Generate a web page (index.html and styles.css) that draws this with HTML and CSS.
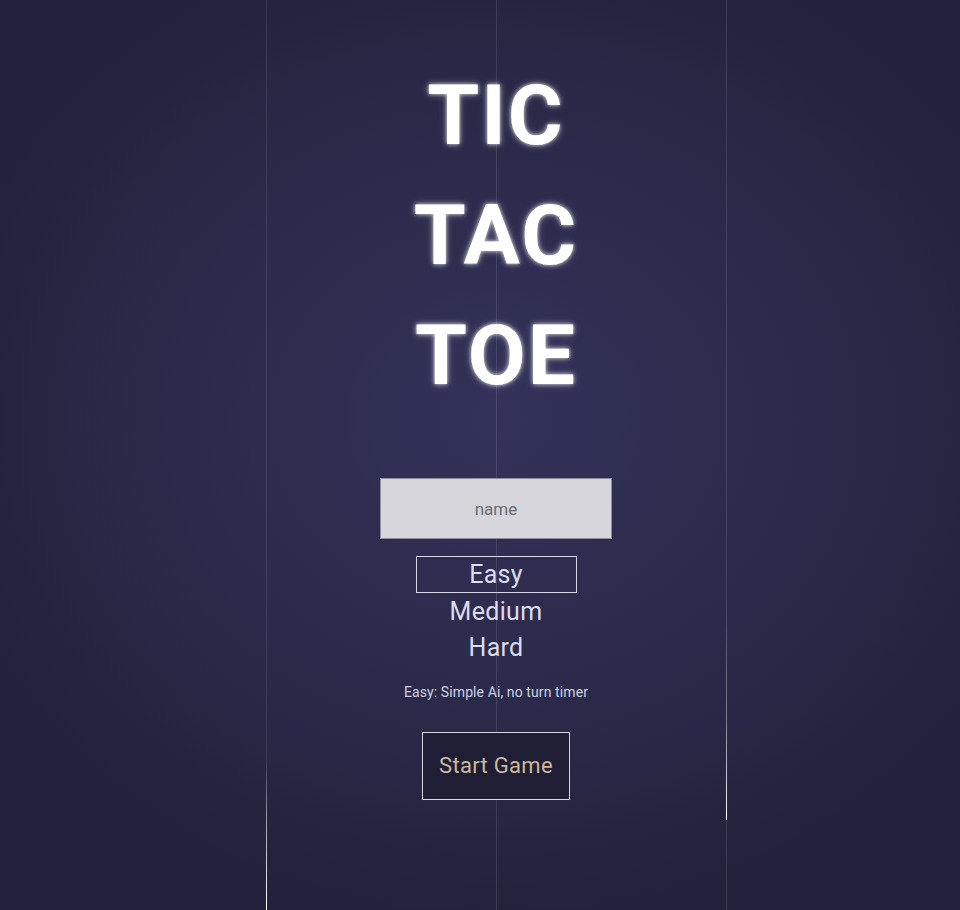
FILE: index.html
```html
<!DOCTYPE html>
<html lang="en">
<head>
<meta charset="utf-8">
<title>Tic Tac Toe</title>
<link rel="stylesheet" href="styles.css">
</head>
<body>
<div class="page">
  <div class="lines" aria-hidden="true">
    <div class="line line-left"><span class="drop drop-left"></span></div>
    <div class="line"></div>
    <div class="line line-right"><span class="drop drop-right"></span></div>
  </div>
  <main class="menu">
    <h1 class="title"><span>TIC</span><span>TAC</span><span>TOE</span></h1>
    <input class="name-input" type="text" placeholder="name">
    <ul class="levels">
      <li class="level selected">Easy</li>
      <li class="level">Medium</li>
      <li class="level">Hard</li>
    </ul>
    <p class="level-info">Easy: Simple Ai, no turn timer</p>
    <button class="start" type="button">Start Game</button>
  </main>
</div>
</body>
</html>
```

FILE: styles.css
```css
html, body {
  margin: 0;
  padding: 0;
  height: 100%;
}
body {
  background: radial-gradient(ellipse 60% 55% at 496px 420px, #33325a 0%, #2b2a4a 55%, #23223c 100%);
  background-color: #252440;
  font-family: Roboto, "Noto Sans", sans-serif;
  overflow: hidden;
}
.page {
  position: relative;
  width: 928px;
  height: 910px;
  margin-left: 32px;
}
.lines {
  position: absolute;
  top: 0;
  left: 234px;
  width: 461px;
  height: 910px;
  display: flex;
  justify-content: space-between;
  pointer-events: none;
}
.line {
  position: relative;
  width: 1px;
  height: 100%;
  background: rgba(255, 255, 255, 0.11);
}
.drop {
  position: absolute;
  left: 0;
  width: 1px;
}
.drop-left {
  top: 760px;
  height: 150px;
  background: linear-gradient(to bottom, rgba(255,255,255,0) 0%, rgba(255,255,255,0.5) 40%, #ffffff 100%);
}
.drop-right {
  top: 600px;
  height: 220px;
  background: linear-gradient(to bottom, rgba(255,255,255,0) 0%, rgba(255,255,255,0.35) 55%, #ffffff 100%);
}
.menu {
  position: relative;
  display: flex;
  flex-direction: column;
  align-items: center;
  padding-top: 56px;
}
.title {
  margin: 0;
  display: flex;
  flex-direction: column;
  align-items: center;
  font-size: 84px;
  line-height: 120px;
  font-weight: 700;
  letter-spacing: 2px;
  color: #ffffff;
  text-shadow: 0 0 4px rgba(255, 255, 255, 0.8), 0 0 9px rgba(255, 255, 255, 0.3);
}
.name-input {
  margin-top: 62px;
  width: 232px;
  height: 61px;
  box-sizing: border-box;
  border: 1px solid #8e8e98;
  background: #d6d6dc;
  font-family: inherit;
  font-size: 17px;
  text-align: center;
  color: #333;
}
.name-input::placeholder {
  color: #6b6b73;
}
.levels {
  list-style: none;
  margin: 17px 0 0;
  padding: 0;
  display: flex;
  flex-direction: column;
  align-items: center;
}
.level {
  width: 161px;
  height: 37px;
  box-sizing: border-box;
  display: flex;
  align-items: center;
  justify-content: center;
  font-size: 25px;
  letter-spacing: 0.3px;
  color: #dcdcf0;
  border: 1px solid transparent;
  margin-bottom: -0.5px;
}
.level.selected {
  border-color: #d8d8ea;
}
.level-info {
  margin: 18px 0 0;
  font-size: 14px;
  letter-spacing: 0.1px;
  color: #cfd0e6;
}
.start {
  margin-top: 32px;
  width: 148px;
  height: 68px;
  box-sizing: border-box;
  background: #1f1e35;
  border: 1px solid #d6d6e2;
  color: #cdb99a;
  font-family: inherit;
  font-size: 22px;
  letter-spacing: 0.3px;
  padding: 0;
}
```
